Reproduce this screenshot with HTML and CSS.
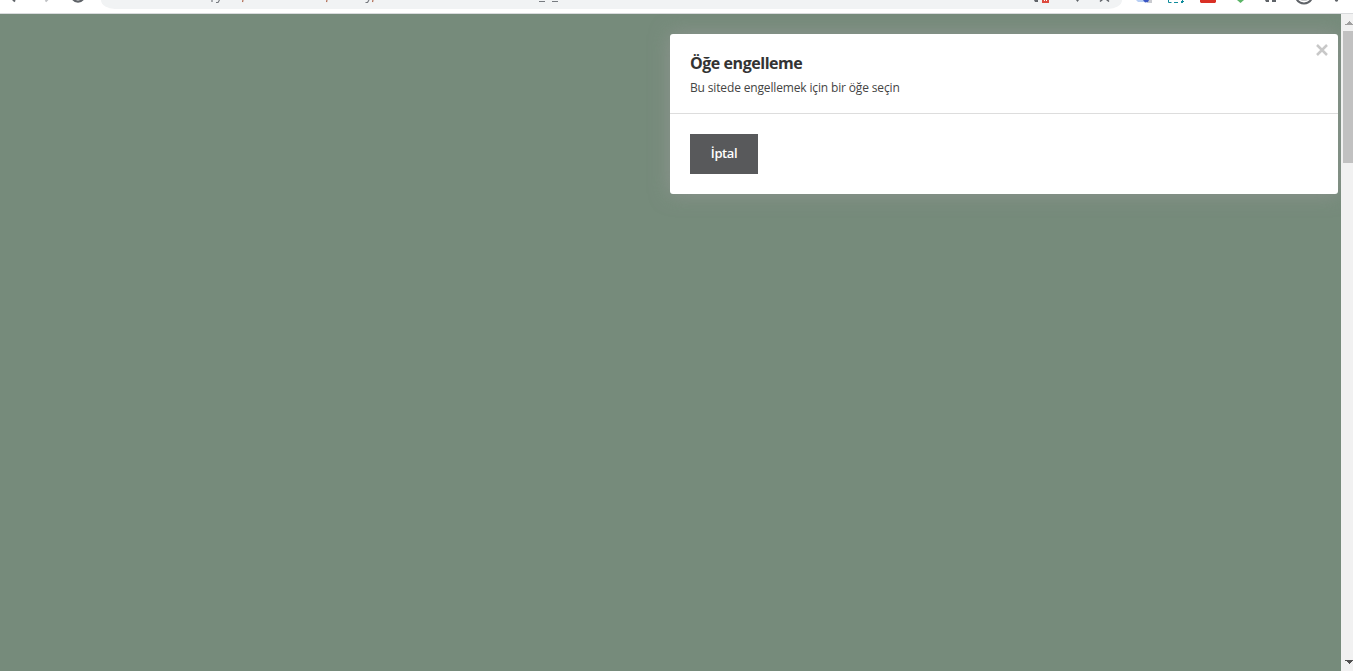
FILE: index.html
```html
<!DOCTYPE html>
<html lang="tr">

<head>
    <meta charset="UTF-8">
    <meta name="viewport" content="width=device-width, initial-scale=1.0">
    <title>Öğe engelleme</title>
    <link rel="stylesheet" href="styles.css">
</head>

<body>
    <header class="toolbar">
        <svg class="nav" width="101" height="13" viewBox="0 0 101 13" fill="none">
            <path d="M11.500 -2L15 1.500" stroke="#5f6368" stroke-width="2" />
            <path d="M49 -2L45.500 1.500" stroke="#bfc1c4" stroke-width="2" />
            <path d="M72.500 -1.500A6.500 6.500 0 0 0 83.500 -1.500" stroke="#5f6368" stroke-width="2.200" />
        </svg>
        <div class="addressBar">
            <svg class="url" width="500" height="9" viewBox="0 0 500 9" fill="none" stroke="#777b80" stroke-width="1.200">
                <path d="M111 0v2M118.500 0l-1.500 2.500h-2" />
                <path d="M142 0l-.5 2M226 0l-.5 2M272 0l-.5 2" stroke="#b06a50" />
                <path d="M268 0l-1.500 2.500h-2" />
                <path d="M438 1.500h6M451 1.500h6" />
            </svg>
            <svg class="urlIcons" width="90" height="9" viewBox="0 0 90 9">
                <path d="M2 0h4v2H3z" fill="#5f6368" />
                <path d="M10 0h7v3h-7z" fill="#dd4b3e" />
                <path d="M12 0h1v1h-1zM14 0h1v1h-1z" fill="#fff" />
                <path d="M44 0h3l-1.500 2z" fill="#5f6368" />
                <path d="M68 1.500l2.500-2M77 1.500l-2.500-2" stroke="#5f6368" stroke-width="1.600" />
            </svg>
        </div>
        <svg class="extensions" width="231" height="13" viewBox="0 0 231 13" fill="none">
            <path d="M14 0h11v2h-9z" fill="#b9d0f5" />
            <path d="M25 0h5v3h-5z" fill="#c9cbd0" />
            <path d="M21 0h6l-1 2-3 .5z" fill="#3955c3" />
            <path d="M46.500 0v2.500h3M52 2.500h4M59 2.500h2M60.500 0v3M59 1.500h3" stroke="#0f8c9c" />
            <path d="M78 0h16v2l-1 1H79l-1-1z" fill="#d93025" />
            <path d="M115 0h7l-3.500 3z" fill="#5bb567" />
            <path d="M143 0h4v2h-3zM150 0h4v2h-4z" fill="#5f6368" />
            <path d="M174.500 -1A8.500 8.500 0 0 0 189.500 -1" stroke="#5f6368" stroke-width="2" />
            <path d="M178 0h8l-2 1h-4z" fill="#c8cacc" />
            <circle cx="214.500" cy="0" r="1.700" fill="#5f6368" />
        </svg>
    </header>
    <main class="page">
        <div class="overlay">
            <section class="dialog">
                <button class="close" aria-label="Kapat">
                    <svg width="12" height="12" viewBox="0 0 12 12">
                        <path d="M1 1l10 10M11 1L1 11" stroke="#c8c8c8" stroke-width="2.500" />
                    </svg>
                </button>
                <div class="dialogHead">
                    <h1>Öğe engelleme</h1>
                    <p>Bu sitede engellemek için bir öğe seçin</p>
                </div>
                <div class="dialogBody">
                    <button class="cancel">İptal</button>
                </div>
            </section>
        </div>
        <div class="scrollbar">
            <svg class="arrow" width="10" height="17" viewBox="0 0 10 17" shape-rendering="crispEdges">
                <path d="M2 11h8v-1H9V9H8V8H7V7H6v1H5v1H4v1H2z" fill="#a0a0a0" />
            </svg>
            <div class="thumb"></div>
            <svg class="arrow" width="10" height="17" viewBox="0 0 10 17" shape-rendering="crispEdges">
                <path d="M2 6h8v1H9v1H8v1H7v1H6V9H5V8H4V7H2z" fill="#505050" />
            </svg>
        </div>
    </main>
</body>

</html>
```
FILE: styles.css
```css
body {
    margin: 0;
    height: 100vh;
    display: flex;
    flex-direction: column;
    overflow: hidden;
    font-family: "Open Sans", "Noto Sans", sans-serif;
}

svg {
    display: block;
    flex: none;
}

.toolbar {
    display: flex;
    height: 13px;
    background: #fff;
    border-bottom: 1px solid #d9dbdd;
}

.addressBar {
    flex: 1;
    display: flex;
    justify-content: space-between;
    height: 9px;
    background: #f1f3f4;
    border-radius: 0 0 14px 14px / 0 0 9px 9px;
}

.page {
    flex: 1;
    display: flex;
}

.overlay {
    flex: 1;
    display: flex;
    justify-content: flex-end;
    align-items: flex-start;
    padding: 20px 3px 0 0;
    background: #768b7b;
    overflow: hidden;
}

.dialog {
    position: relative;
    width: 668px;
    background: #fff;
    border-radius: 3px;
    box-shadow: 0 0 20px rgba(153, 153, 153, 0.7);
}

.dialogHead {
    box-sizing: border-box;
    height: 80px;
    padding: 18px 20px 0;
    border-bottom: 1px solid #ddd;
}

.dialogHead h1 {
    margin: 0;
    font-size: 16px;
    font-weight: 700;
    line-height: 22px;
    letter-spacing: -0.45px;
    color: #333;
}

.dialogHead p {
    margin: 4px 0 0;
    font-size: 12px;
    line-height: 19px;
    letter-spacing: -0.15px;
    color: #444;
}

.dialogBody {
    padding: 20px;
}

.cancel {
    display: block;
    width: 68px;
    height: 40px;
    padding: 0 0 2px;
    border: 0;
    background: #58595b;
    color: #fff;
    font-family: inherit;
    font-size: 13px;
    font-weight: 600;
    letter-spacing: -0.4px;
}

.close {
    position: absolute;
    top: 10px;
    right: 10px;
    padding: 0;
    border: 0;
    background: none;
}

.scrollbar {
    width: 12px;
    display: flex;
    flex-direction: column;
    align-items: flex-end;
    background: #f1f1f1;
}

.thumb {
    width: 10px;
    height: 132px;
    background: #c1c1c1;
    margin-bottom: auto;
}
```
